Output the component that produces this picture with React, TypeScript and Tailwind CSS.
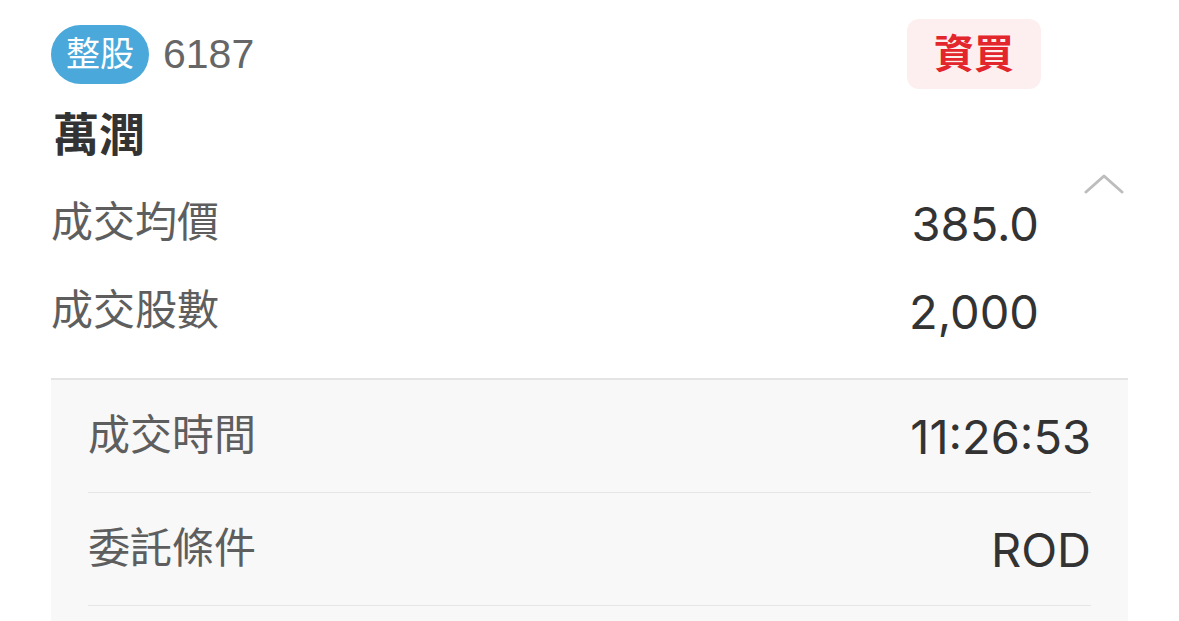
const FONT = "font-['Liberation_Sans','Noto_Sans_CJK_TC',sans-serif]";
const NUM = "font-['Inter','Liberation_Sans',sans-serif]";

const summary = [
  { label: '成交均價', value: '385.0' },
  { label: '成交股數', value: '2,000' },
];

const details = [
  { label: '成交時間', value: '11:26:53' },
  { label: '委託條件', value: 'ROD' },
];

function ChevronUp() {
  return (
    <svg width="40" height="20" viewBox="0 0 40 20" fill="none">
      <path d="M2 18 L20 2 L38 18" stroke="#BDBDBD" strokeWidth="3" strokeLinecap="round" strokeLinejoin="round" />
    </svg>
  );
}

export default function App() {
  return (
    <div className={`${FONT} w-full h-[621px] overflow-hidden bg-white px-[51px]`}>
      {/* Header */}
      <div className="flex items-center justify-between pt-[19px] h-[89px]">
        <div className="flex items-center gap-[14px]">
          <span className="flex h-[59px] items-center rounded-full bg-[#4AA9DA] px-[15px] text-[34px] leading-none text-white">
            整股
          </span>
          <span className="text-[41px] leading-none text-[#666666]">6187</span>
        </div>
        <div className="mr-[87px] flex h-[70px] w-[134px] items-center justify-center rounded-[12px] bg-[#FDEFEF] text-[40px] font-bold leading-none text-[#E3262C]">
          資買
        </div>
      </div>

      {/* Name */}
      <div className="mt-[23px] pl-[2px] text-[46px] font-bold leading-none text-[#333333]">萬潤</div>

      {/* Summary rows */}
      <div className="mt-[21px] flex pb-[23px]">
        <div className="flex-1">
          {summary.map((row) => (
            <div key={row.label} className="flex h-[88px] items-center justify-between">
              <span className="text-[42px] leading-none text-[#5E5E5E]">{row.label}</span>
              <span className={`${NUM} text-[47px] leading-none text-[#333333]`}>{row.value}</span>
            </div>
          ))}
        </div>
        <div className="w-[89px] -mt-[5px] pl-[45px]">
          <ChevronUp />
        </div>
      </div>

      {/* Detail panel */}
      <div className="border-t-2 border-[#E4E4E4] bg-[#F8F8F8] px-[37px] h-[300px]">
        {details.map((row) => (
          <div key={row.label} className="flex h-[113px] items-center justify-between border-b border-[#E6E6E6]">
            <span className="text-[42px] leading-none text-[#5E5E5E]">{row.label}</span>
            <span className={`${NUM} text-[47px] leading-none text-[#333333]`}>{row.value}</span>
          </div>
        ))}
      </div>
    </div>
  );
}
